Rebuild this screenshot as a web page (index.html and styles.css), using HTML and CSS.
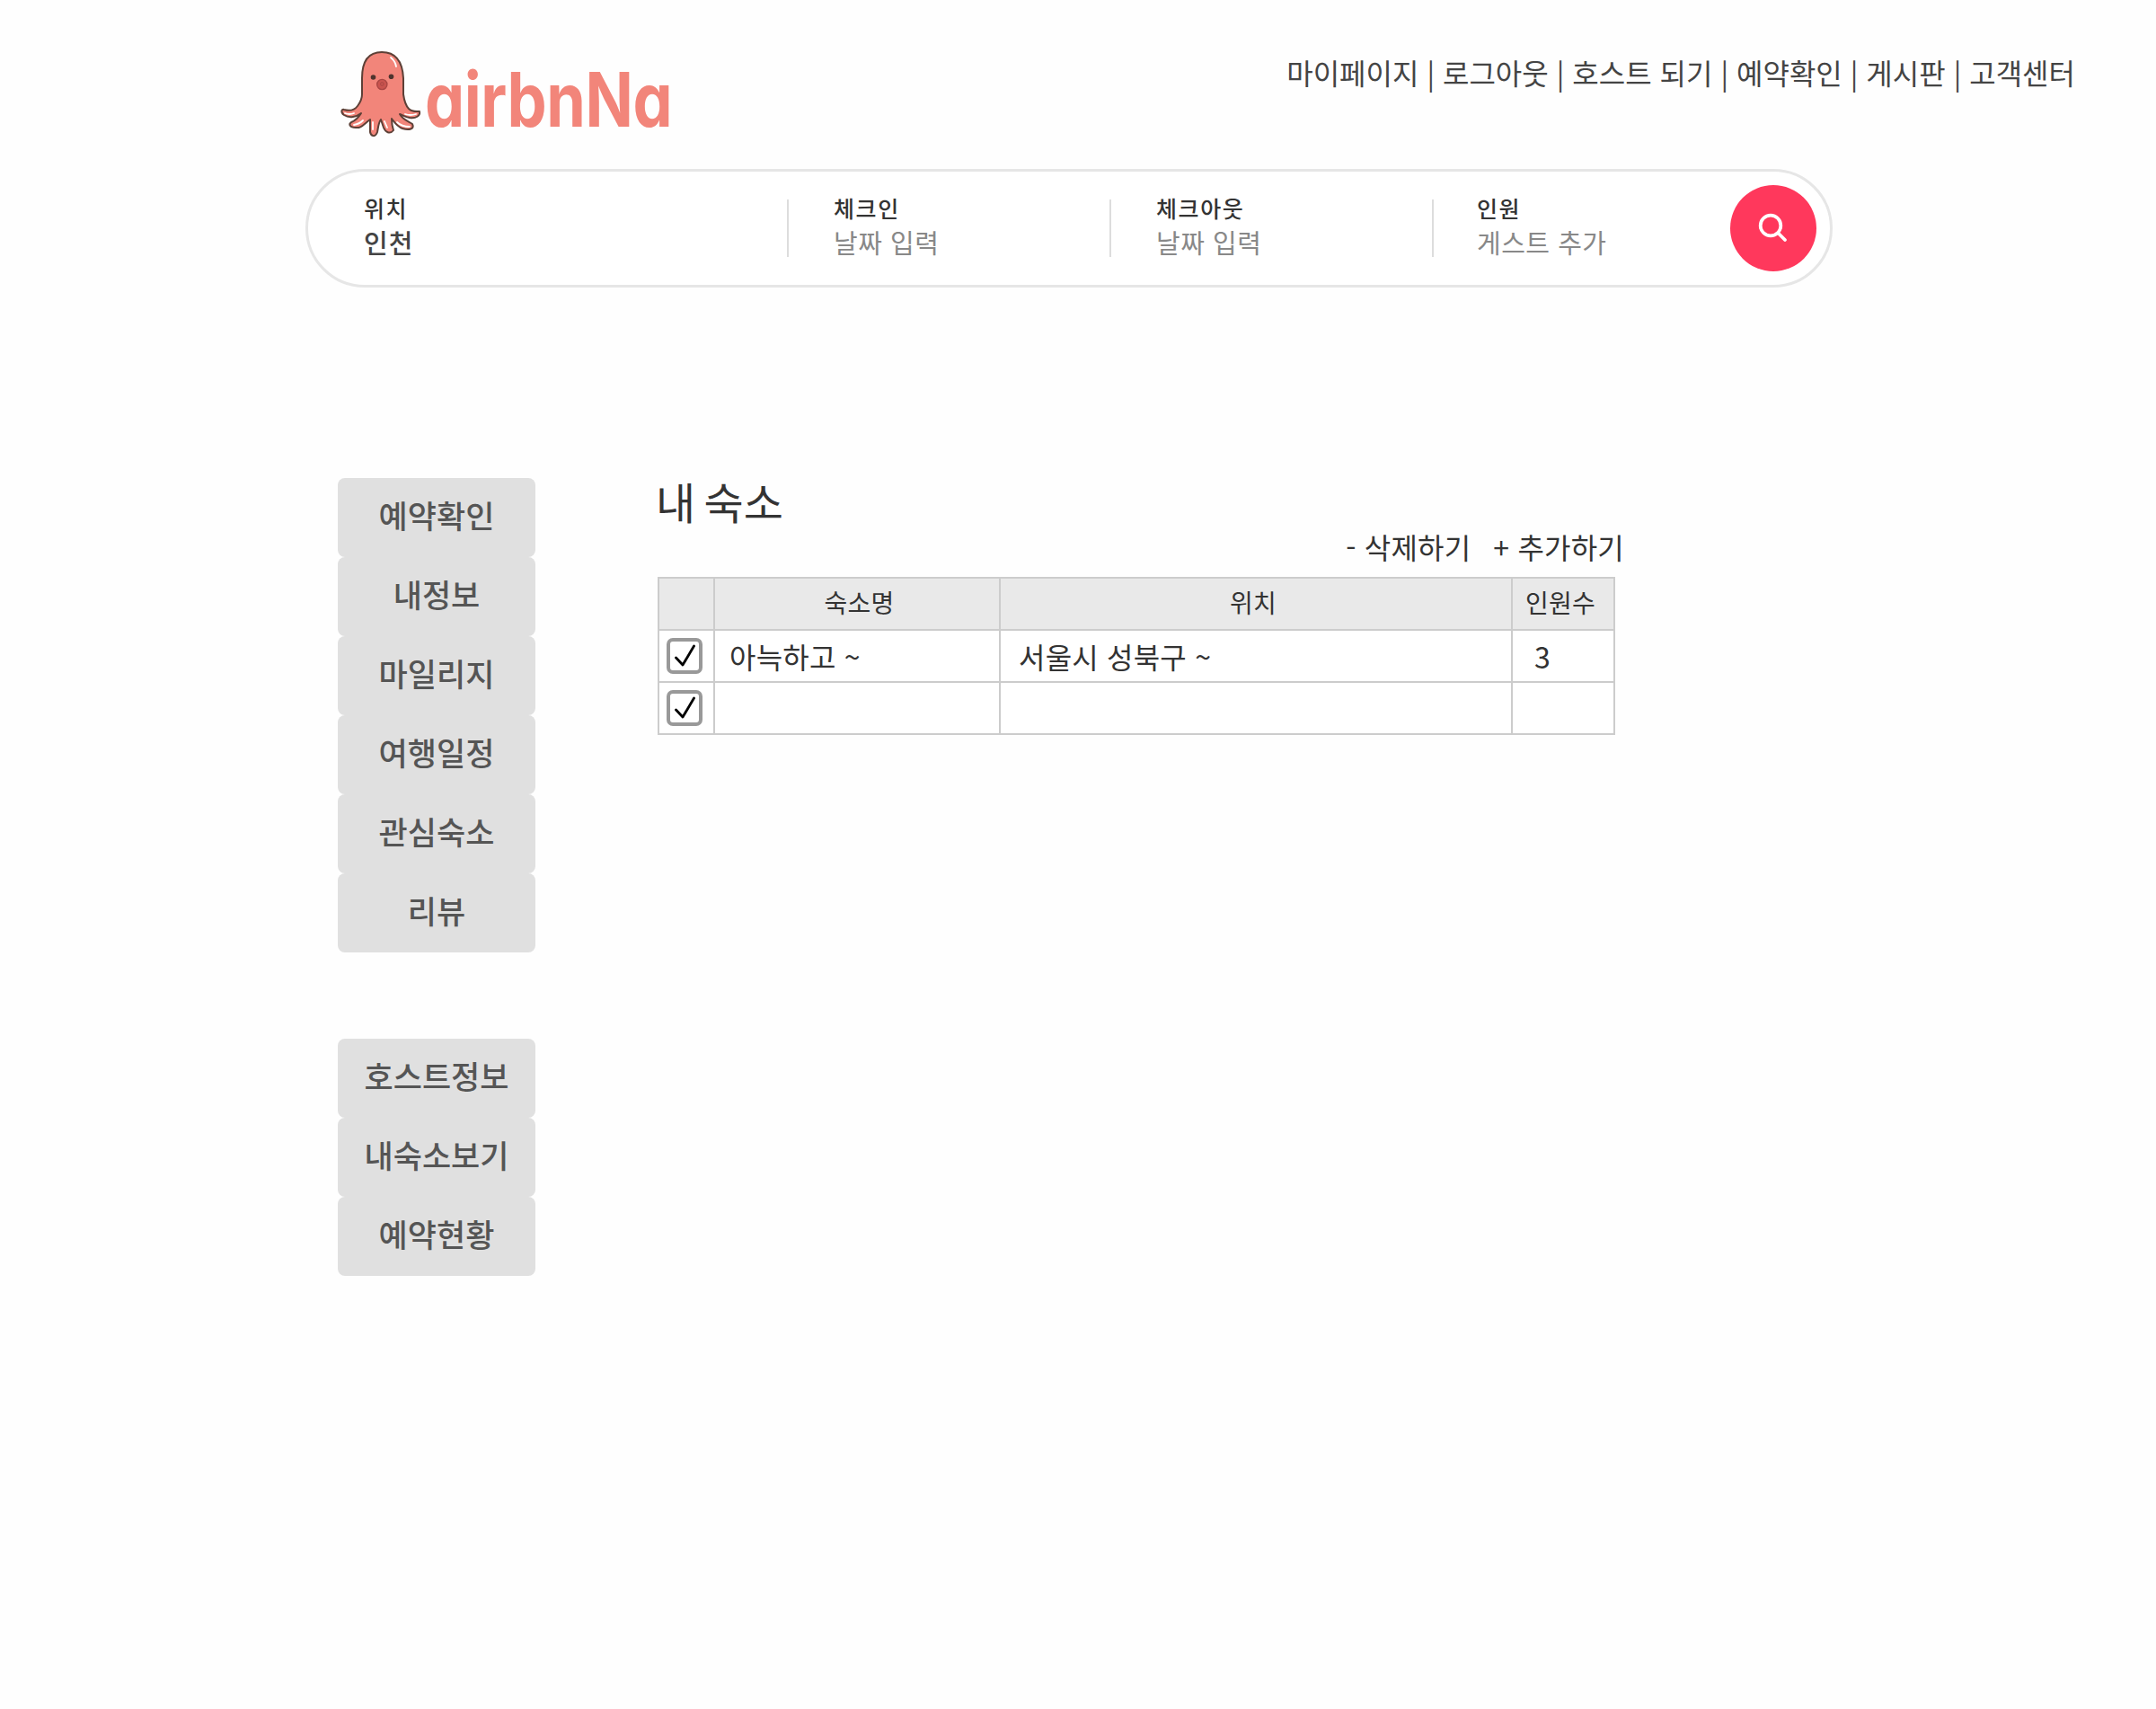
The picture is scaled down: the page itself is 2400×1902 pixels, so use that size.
FILE: index.html
```html
<!DOCTYPE html>
<html lang="ko">
<head>
<meta charset="utf-8">
<title>airbnNa</title>
<link rel="stylesheet" href="styles.css">
</head>
<body>
<header class="header">
  <a class="logo">
    <svg class="logo-mark" viewBox="0 0 90 98" width="90" height="98">
      <path d="M24 49V31C24 12 31 2 46 2S69 12 70 31V49C71 56 73 62 76 65C80 69 84 68 88 68C89 73 84 76 77 75C72 74 69 72 66 71C70 78 76 79 80 82C83 88 76 89 69 87C63 85 60 80 57 76C57 82 58 86 59 89C55 94 50 91 48 86L45 77C42 81 42 87 41 91C39 97 34 96 33 91V77C26 82 23 87 17 86C10 86 9 82 12 80C17 78 20 75 23 70C18 74 10 76 4 72C0 69 1 65 4 66C11 68 16 66 19 62C22 58 24 54 24 49Z" fill="#f2857a" stroke="#5d4037" stroke-width="2" stroke-linejoin="round"/>
      <g fill="none" stroke="#fff" stroke-width="1.8" stroke-linecap="round"><path d="M56 8Q61 12 62 18"/><path d="M5 70Q10 72 15 70M15 83Q21 82 25 78M36 88V80M52 86L49 79M63 80Q68 85 77 85M72 71Q78 73 84 71"/></g>
      <g fill="#4e342e"><circle cx="36.5" cy="30" r="2.8"/><circle cx="56.5" cy="29.3" r="2.8"/></g>
      <circle cx="46.3" cy="38" r="5.6" fill="#c9544f" stroke="#a94643" stroke-width="1.4"/>
      <circle cx="46.3" cy="37.5" r="1.8" fill="none" stroke="#a94643"/>
    </svg>
    <span class="logo-text">airbnNa</span>
  </a>
  <nav class="nav">마이페이지 | 로그아웃 | 호스트 되기 | 예약확인 | 게시판 | 고객센터</nav>
</header>

<form class="search">
  <div class="field field-location"><span class="label">위치</span><span class="value filled">인천</span></div>
  <div class="field"><span class="label">체크인</span><span class="value">날짜 입력</span></div>
  <div class="field"><span class="label">체크아웃</span><span class="value">날짜 입력</span></div>
  <div class="field field-guests"><span class="label">인원</span><span class="value">게스트 추가</span></div>
  <button class="search-button" type="button" aria-label="검색">
    <svg viewBox="0 0 34 34" width="34" height="34" fill="none" stroke="#fff" stroke-width="3.8" stroke-linecap="round"><circle cx="14" cy="14" r="11.3"/><path d="M22.5 22.5L30 30"/></svg>
  </button>
</form>

<div class="layout">
  <aside class="sidebar">
    <ul class="menu"><li>예약확인</li><li>내정보</li><li>마일리지</li><li>여행일정</li><li>관심숙소</li><li>리뷰</li></ul>
    <ul class="menu"><li>호스트정보</li><li>내숙소보기</li><li>예약현황</li></ul>
  </aside>
  <main class="main">
    <h1 class="title">내 숙소</h1>
    <div class="actions"><span>- 삭제하기</span><span>+ 추가하기</span></div>
    <div class="table">
      <div class="cell head"></div><div class="cell head head-name">숙소명</div><div class="cell head head-place">위치</div><div class="cell head head-count">인원수</div>
      <div class="cell"><span class="check"><svg viewBox="0 0 24 26" width="24" height="26"><path d="M2.5 15L10 23L22.5 2"/></svg></span></div>
      <div class="cell name">아늑하고 ~</div><div class="cell place">서울시 성북구 ~</div><div class="cell count">3</div>
      <div class="cell"><span class="check"><svg viewBox="0 0 24 26" width="24" height="26"><path d="M2.5 15L10 23L22.5 2"/></svg></span></div>
      <div class="cell"></div><div class="cell"></div><div class="cell"></div>
    </div>
  </main>
</div>
</body>
</html>
```
FILE: styles.css
```css
* { box-sizing: border-box; }
body { margin: 0; background: #fefefe; color: #333; font-family: "Noto Sans CJK KR", sans-serif; }
.header { display: flex; justify-content: space-between; align-items: flex-start; height: 188px; padding: 56px 90px 0 379px; }
.logo { display: flex; }
.logo-mark { display: block; }
.logo-text { margin: 0 0 0 4px; font: 700 84px/110px Inter, sans-serif; font-feature-settings: "cv11"; letter-spacing: -.5px; color: #f2857a; transform: scaleX(.834); transform-origin: left; }
.nav { font-size: 32px; line-height: 48px; color: #444; white-space: pre; }
.search { display: flex; align-items: center; width: 1700px; height: 132px; margin-left: 340px; padding-right: 15px; border: 3px solid #e6e6e6; border-radius: 66px; background: #fff; }
.field { display: flex; flex-direction: column; width: 359px; height: 64px; padding-left: 50px; border-left: 2px solid #ddd; }
.field-location { width: 533px; padding-left: 62px; border-left: 0; }
.field-guests { flex: 1; padding-left: 48px; }
.label { margin-top: -10px; font-size: 25px; font-weight: 500; line-height: 38px; letter-spacing: 1.6px; color: #333; }
.value { font-size: 29px; line-height: 38px; letter-spacing: .5px; color: #888; }
.value.filled { font-weight: 500; letter-spacing: 1px; color: #444; }
.search-button { display: grid; place-items: center; width: 96px; height: 96px; padding: 0; border: 0; border-radius: 50%; background: #ff385c; }
.layout { display: flex; padding: 212px 0 0 376px; }
.sidebar { display: flex; flex-direction: column; gap: 96px; width: 220px; margin-right: 136px; }
.menu { margin: 0; padding: 0; list-style: none; }
.menu li { display: grid; place-items: center; height: 88px; padding-bottom: 7px; border-radius: 8px; background: #e0e0e0; color: #555; font-size: 35px; font-weight: 500; line-height: 50px; }
.main { width: 1076px; }
.title { margin: -2px 0 0 -2px; font-size: 48px; font-weight: 400; line-height: 54px; word-spacing: -4px; }
.actions { display: flex; justify-content: flex-end; gap: 25px; height: 58px; font-size: 32px; line-height: 48px; letter-spacing: .2px; }
.table { display: grid; grid-template-columns: 60px 316px 568px 112px; grid-template-rows: repeat(3, 56px); gap: 2px; width: 1066px; padding: 2px; background: #ccc; }
.cell { display: flex; align-items: center; background: #fff; font-size: 32px; line-height: 46px; letter-spacing: .2px; }
.head { justify-content: center; padding: 0 0 4px; background: #e9e9e9; font-size: 28px; }
.head-name { padding-left: 5px; }
.head-place { padding-right: 6px; }
.head-count { padding-right: 6px; }
.name { padding-left: 16px; }
.place { padding-left: 20px; }
.count { padding-left: 24px; }
.check { display: grid; place-items: center; width: 40px; height: 40px; margin-left: 8px; border: 4px solid #999; border-radius: 7px; }
.check path { fill: none; stroke: #000; stroke-width: 2.8; stroke-linecap: round; stroke-linejoin: round; }
```
